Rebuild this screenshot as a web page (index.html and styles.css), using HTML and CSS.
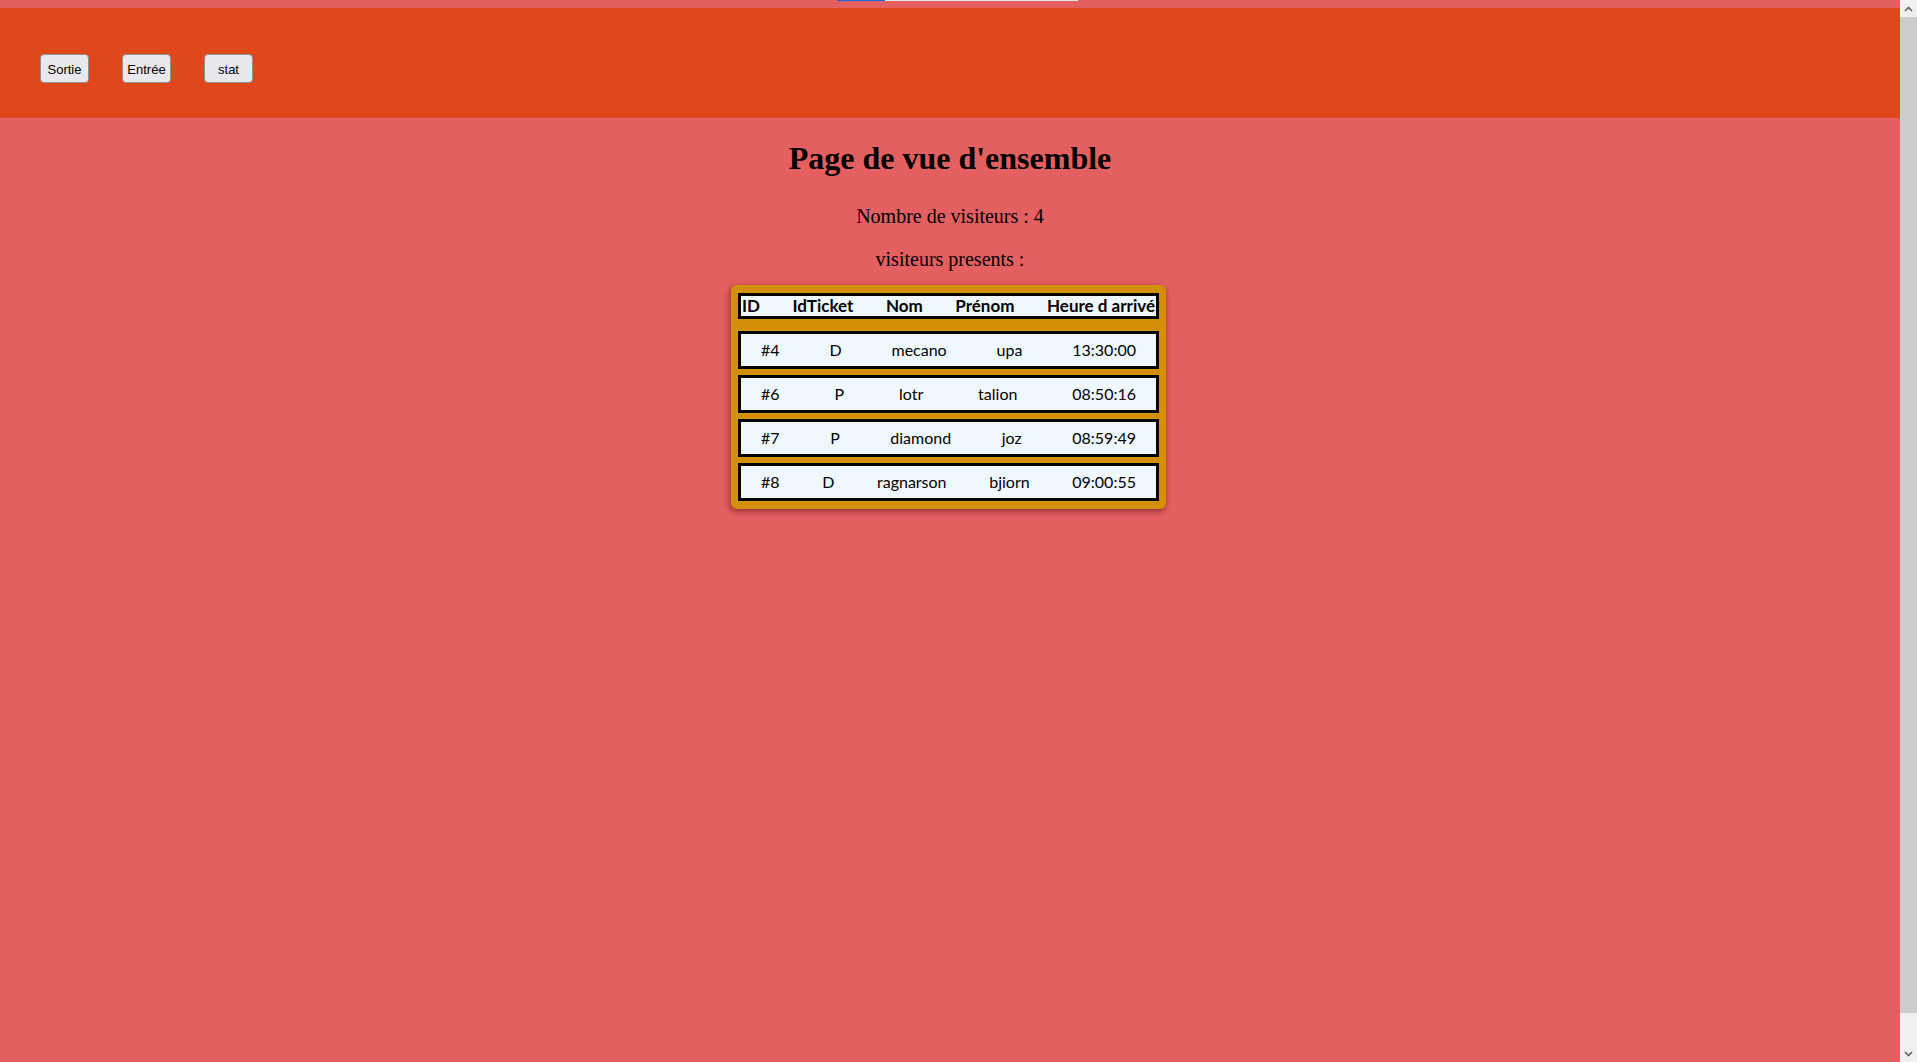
FILE: index.html
```html
<!DOCTYPE html>
<html lang="fr">
<head>
<meta charset="utf-8">
<title>Vue d'ensemble</title>
<link rel="stylesheet" href="styles.css">
</head>
<body>
<div class="page">
  <div class="loader"><span class="loader-fill"></span></div>
  <header class="topbar">
    <button class="btn">Sortie</button>
    <button class="btn">Entrée</button>
    <button class="btn">stat</button>
  </header>
  <main class="content">
    <h1 class="title">Page de vue d'ensemble</h1>
    <p class="count">Nombre de visiteurs : 4</p>
    <p class="present">visiteurs presents :</p>
    <section class="board">
      <div class="head-row">
        <span>ID</span><span>IdTicket</span><span>Nom</span><span>Prénom</span><span>Heure d arrivé</span>
      </div>
      <div class="rows">
        <div class="row"><span>#4</span><span>D</span><span>mecano</span><span>upa</span><span>13:30:00</span></div>
        <div class="row"><span>#6</span><span>P</span><span>lotr</span><span>talion</span><span>08:50:16</span></div>
        <div class="row"><span>#7</span><span>P</span><span>diamond</span><span>joz</span><span>08:59:49</span></div>
        <div class="row"><span>#8</span><span>D</span><span>ragnarson</span><span>bjiorn</span><span>09:00:55</span></div>
      </div>
    </section>
  </main>
</div>
<div class="scrollbar" aria-hidden="true">
  <div class="sb-arrow">
    <svg width="9" height="6" viewBox="0 0 9 6"><path d="M1 5 L4.5 1.5 L8 5" fill="none" stroke="#606060" stroke-width="1.6"/></svg>
  </div>
  <div class="sb-thumb"></div>
  <div class="sb-track"></div>
  <div class="sb-arrow">
    <svg width="9" height="6" viewBox="0 0 9 6"><path d="M1 1 L4.5 4.5 L8 1" fill="none" stroke="#606060" stroke-width="1.6"/></svg>
  </div>
</div>
</body>
</html>
```
FILE: styles.css
```css
html {
  background: #e45f60;
}
body {
  margin: 0;
  background: #e45f60;
  font-family: "Liberation Serif", "Times New Roman", serif;
  color: #000;
  overflow: hidden;
}
.page {
  position: relative;
  margin-right: 17px;
  padding: 8px 0;
  min-height: 100vh;
}
.loader {
  position: absolute;
  top: 0;
  left: 837px;
  width: 241px;
  height: 1px;
  background: #e6e6e6;
}
.loader-fill {
  display: block;
  width: 48px;
  height: 1px;
  background: #0f6cd4;
}
.topbar {
  height: 110px;
  box-sizing: border-box;
  background: #df481a;
  display: flex;
  align-items: flex-start;
  gap: 33px;
  padding: 46px 0 0 40px;
}
.btn {
  width: 49px;
  height: 29px;
  padding: 1px 0 0;
  box-sizing: border-box;
  border: 1px solid #8f8f9d;
  border-radius: 4px;
  background: #e9e9ed;
  color: #000;
  font-family: "Liberation Sans", Arial, sans-serif;
  font-size: 13px;
}
.content {
  display: flex;
  flex-direction: column;
  align-items: center;
}
.title {
  margin: 22px 0 0;
  font-size: 32px;
  font-weight: bold;
  line-height: 37px;
}
.count, .present {
  font-size: 20px;
  line-height: 21.5px;
  margin: 0;
}
.count {
  margin-top: 29px;
}
.present {
  margin-top: 21px;
}
.board {
  margin-top: 15px;
  margin-left: -3px;
  width: 435px;
  box-sizing: border-box;
  padding: 7.5px 7px 8px 7px;
  background: #d28f07;
  border-radius: 6px;
  box-shadow: -1px 2px 6px rgba(60, 0, 0, 0.55);
  font-family: Lato, "Liberation Sans", sans-serif;
  font-size: 16px;
}
.head-row {
  display: flex;
  justify-content: space-between;
  border: 3px solid #000;
  background: #f0f8ff;
  line-height: 20px;
  padding: 0 1px;
  font-weight: bold;
  font-size: 17px;
}
.rows {
  margin-top: 12px;
  display: flex;
  flex-direction: column;
  gap: 6px;
}
.row {
  display: flex;
  justify-content: space-between;
  border: 3px solid #000;
  background: #f0f8ff;
  line-height: 20px;
  padding: 6px 20px;
}
.scrollbar {
  position: fixed;
  top: 0;
  right: 0;
  width: 17px;
  height: 100vh;
  background: #f0f0f0;
  display: flex;
  flex-direction: column;
}
.sb-arrow {
  height: 17px;
  display: flex;
  align-items: center;
  justify-content: center;
  flex: none;
}
.sb-thumb {
  height: 996px;
  background: #cdcdcd;
  flex: none;
}
.sb-track {
  flex: 1;
}
```
